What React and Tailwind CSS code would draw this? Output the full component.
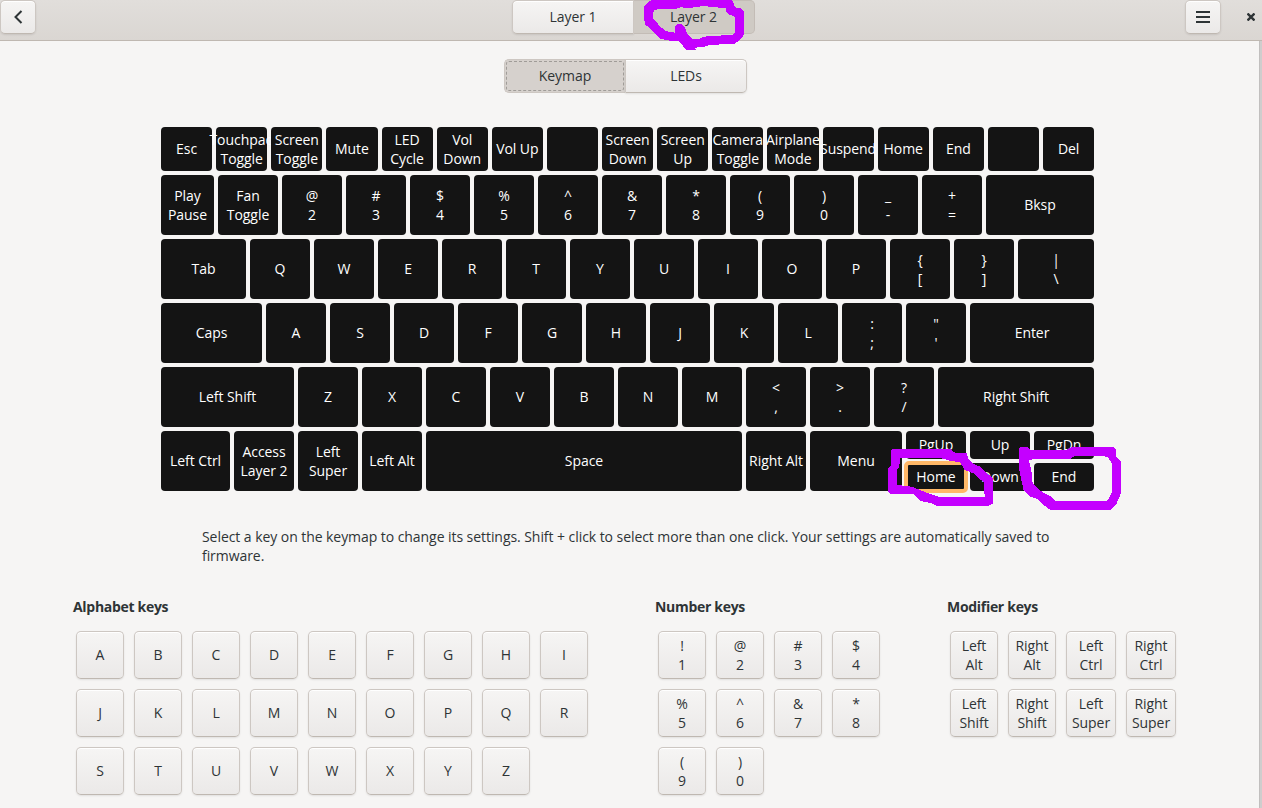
import React from "react";

const W = (label, width = "w-[60px]") => ({ label, width });

const rows = [
  {
    height: "h-[44px]",
    keys: ["Esc", "Touchpad\nToggle", "Screen\nToggle", "Mute", "LED\nCycle", "Vol\nDown", "Vol Up", "", "Screen\nDown", "Screen\nUp", "Camera\nToggle", "Airplane\nMode", "Suspend", "Home", "End", "", "Del"].map((l) => W(l, "w-0 flex-1")),
  },
  {
    height: "h-[60px]",
    keys: [W("Play\nPause", "w-[53px]"), W("Fan\nToggle"), ...["@\n2", "#\n3", "$\n4", "%\n5", "^\n6", "&\n7", "*\n8", "(\n9", ")\n0", "_\n-", "+\n="].map((l) => W(l)), W("Bksp", "w-[108px]")],
  },
  {
    height: "h-[60px]",
    keys: [W("Tab", "w-[85px]"), ...["Q", "W", "E", "R", "T", "Y", "U", "I", "O", "P", "{\n[", "}\n]"].map((l) => W(l)), W("|\n\\", "w-[76px]")],
  },
  {
    height: "h-[60px]",
    keys: [W("Caps", "w-[101px]"), ...["A", "S", "D", "F", "G", "H", "J", "K", "L", ":\n;", "\"\n'"].map((l) => W(l)), W("Enter", "w-[124px]")],
  },
  {
    height: "h-[60px]",
    keys: [W("Left Shift", "w-[133px]"), ...["Z", "X", "C", "V", "B", "N", "M", "<\n,", ">\n.", "?\n/"].map((l) => W(l)), W("Right Shift", "w-[156px]")],
  },
];

const bottomKeys = [
  W("Left Ctrl", "w-[69px]"),
  W("Access\nLayer 2"),
  W("Left\nSuper"),
  W("Left Alt"),
  W("Space", "w-[316px]"),
  W("Right Alt"),
  W("Menu", "w-[92px]"),
];

const arrowKeys = [
  ["PgUp", "Home"],
  ["Up", "Down"],
  ["PgDn", "End"],
];

const lines = (label) => label.split("\n").map((t, i) => <span key={i}>{t}</span>);
const linePad = (label) => (label.includes("\n") ? "" : "pb-px");

function Key({ label, size, selected = false }) {
  return (
    <div className={`relative flex shrink-0 flex-col items-center justify-center rounded-[4px] bg-[#141414] whitespace-nowrap text-white ${linePad(label)} ${size}`}>
      {lines(label)}
      {selected && <div className="absolute -inset-[2px] rounded-[5px] border-4 border-[#ffb868]" />}
    </div>
  );
}

const raised =
  "border border-[#cdc7c2] border-b-[#bfb8b1] bg-linear-to-b from-[#f6f5f4] to-[#ebe9e8] shadow-[inset_0_1px_#fff,0_1px_2px_rgba(0,0,0,0.09)]";

function PickKey({ label, wide = false }) {
  return (
    <button className={`flex h-12 flex-col items-center justify-center rounded-[5px] ${linePad(label)} ${wide ? "w-[50px]" : "w-12"} ${raised}`}>
      {lines(label)}
    </button>
  );
}

function Group({ title, className, grid, children }) {
  return (
    <section className={className}>
      <h2 className="font-bold tracking-[-0.3px]">{title}</h2>
      <div className={`mt-[15px] ml-[3px] grid gap-[10px] ${grid}`}>{children}</div>
    </section>
  );
}

function Marks() {
  return (
    <svg className="pointer-events-none absolute top-0 left-0 z-20" width="1262" height="808" fill="#c400ff" fillRule="evenodd" shapeRendering="crispEdges">
      <g transform="translate(490 0) scale(.33333)">
        <path d="M462 22 468 12 480 2 490 0H724L732 10 734 22 752 24 762 34V104L748 122 734 131 660 135 640 141 615 143 617 150H588L568 124 540 122 510 116 490 96 480 84 464 74ZM488 42 494 30 506 27 560 26 570 22 600 24 640 18 700 24H708V36L718 44 734 50 736 98 728 106H700L640 110 630 116H606L590 98 584 80 574 72H562L554 82 556 98 530 94 510 80 500 66 490 58Z" />
      </g>
      <g transform="translate(870 420) scale(.33333)">
        <path d="M62 92 68 87H240L248 94 258 99H290L296 118 310 132 330 140 368 175 370 250 356 258H200L186 250 150 243 130 222H60L54 212V146L62 136ZM90 114H210L240 122 262 126H270L284 150 310 160 342 188 344 230H204L180 222 155 212 125 200 82 195 80 150 88 140Z" />
        <path d="M448 84 454 81H474L480 90H590L604 81H732L738 88V108L752 124V222L740 250 724 269H540L520 254 500 236 480 230 460 208 448 150ZM476 120 500 116 600 117 612 109 700 108 714 112 726 130V218L712 242H556L540 228 510 212 488 190 484 150Z" />
      </g>
    </svg>
  );
}

export default function App() {
  return (
    <div className="relative flex h-[808px] w-[1262px] flex-col overflow-hidden bg-[#f6f5f4] font-['Open_Sans',sans-serif] text-[14px] leading-[19px] tracking-[-0.06px] text-[#2e3436]">
      <header className="flex h-[41px] shrink-0 items-start border-b border-[#bfb8b1] bg-linear-to-b from-[#e1dedb] to-[#dad6d2]">
        <button className={`flex h-[34px] w-9 items-center justify-center rounded-[5px] ${raised}`}>
          <svg width="16" height="16" fill="none" stroke="#2e3436" strokeWidth="2">
            <path d="M11.5 2 5.5 8 11.5 14" />
          </svg>
        </button>
        <div className="ml-[476px] flex h-[34px]">
          <button className={`flex w-[122px] items-center justify-center rounded-l-[5px] pb-px ${raised}`}>Layer 1</button>
          <button className="flex w-[121px] items-center justify-center rounded-r-[5px] border border-l-0 border-[#c3bcb6] bg-[#cfcac4] pr-px pb-px">Layer 2</button>
        </div>
        <button className={`ml-[430px] flex h-[34px] w-9 items-center justify-center rounded-[5px] ${raised}`}>
          <svg width="14" height="12" fill="#2e3436">
            <path d="M0 0h14v2H0zM0 5h14v2H0zM0 10h14v2H0z" />
          </svg>
        </button>
        <button className="ml-[26px] flex h-[34px] w-2 items-center justify-center">
          <svg width="8" height="8" fill="none" stroke="#2e3436" strokeWidth="2.4">
            <path d="M.5.5 7.5 7.5M7.5.5.5 7.5" />
          </svg>
        </button>
      </header>

      <div className="flex min-h-0 flex-1">
        <main className="w-[1259px] shrink-0">
          <div className="mt-[18px] ml-[504px] flex h-[34px] w-[243px] rounded-[5px]">
            <button className="flex w-[121px] rounded-l-[5px] border border-r-0 border-[#cdc7c2] bg-[#d6d1cd] p-px">
              <span className="flex h-full w-full items-center justify-center rounded-[3px] border border-dashed border-[#a09c98] pb-px">Keymap</span>
            </button>
            <button className={`flex w-[122px] items-center justify-center rounded-r-[5px] pb-px ${raised}`}>LEDs</button>
          </div>

          <div className="mt-[34px] ml-[161px] flex w-[933px] flex-col gap-1">
            {rows.map((row, r) => (
              <div key={r} className="flex gap-1">
                {row.keys.map((k, i) => (
                  <Key key={i} label={k.label} size={`${row.height} ${k.width}`} />
                ))}
              </div>
            ))}
            <div className="flex gap-1">
              {bottomKeys.map((k) => (
                <Key key={k.label} label={k.label} size={`h-[60px] ${k.width}`} />
              ))}
              {arrowKeys.map((col) => (
                <div key={col[0]} className="flex flex-col gap-1">
                  {col.map((l) => (
                    <Key key={l} label={l} size="h-[28px] w-[60px]" selected={l === "Home"} />
                  ))}
                </div>
              ))}
            </div>
          </div>

          <p className="mt-[36px] ml-[202px] w-[856px]">
            Select a key on the keymap to change its settings. Shift + click to select more than one click. Your settings are automatically saved to firmware.
          </p>

          <div className="mt-[32px] ml-[73px] flex">
            <Group title="Alphabet keys" className="w-[582px]" grid="w-fit grid-cols-[repeat(9,48px)]">
              {[..."ABCDEFGHIJKLMNOPQRSTUVWXYZ"].map((l) => (
                <PickKey key={l} label={l} />
              ))}
            </Group>
            <Group title="Number keys" className="w-[292px]" grid="w-fit grid-cols-[repeat(4,48px)]">
              {["!\n1", "@\n2", "#\n3", "$\n4", "%\n5", "^\n6", "&\n7", "*\n8", "(\n9", ")\n0"].map((l) => (
                <PickKey key={l} label={l} />
              ))}
            </Group>
            <Group title="Modifier keys" className="w-[240px]" grid="w-fit grid-cols-[48px_48px_50px_50px]">
              {["Left\nAlt", "Right\nAlt", "Left\nCtrl", "Right\nCtrl", "Left\nShift", "Right\nShift", "Left\nSuper", "Right\nSuper"].map((l, i) => (
                <PickKey key={l} label={l} wide={i % 4 > 1} />
              ))}
            </Group>
          </div>
        </main>
        <div className="w-[3px] border-l border-[#c1bfbe] bg-[#cfcdcd]" />
      </div>
      <Marks />
    </div>
  );
}
